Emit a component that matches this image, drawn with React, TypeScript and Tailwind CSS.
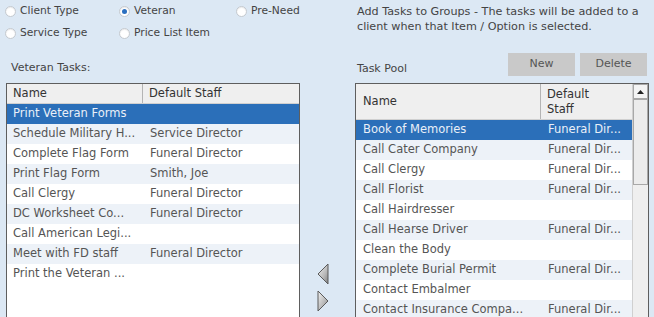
import React from "react";

const font = { fontFamily: '"DejaVu Sans", Verdana, sans-serif' };

const veteranTasks = [
    { name: "Print Veteran Forms", staff: "" },
    { name: "Schedule Military H...", staff: "Service Director" },
    { name: "Complete Flag Form", staff: "Funeral Director" },
    { name: "Print Flag Form", staff: "Smith, Joe" },
    { name: "Call Clergy", staff: "Funeral Director" },
    { name: "DC Worksheet Co...", staff: "Funeral Director" },
    { name: "Call American Legi...", staff: "" },
    { name: "Meet with FD staff", staff: "Funeral Director" },
    { name: "Print the Veteran ...", staff: "" },
];

const taskPool = [
    { name: "Book of Memories", staff: "Funeral Dir..." },
    { name: "Call Cater Company", staff: "Funeral Dir..." },
    { name: "Call Clergy", staff: "Funeral Dir..." },
    { name: "Call Florist", staff: "Funeral Dir..." },
    { name: "Call Hairdresser", staff: "" },
    { name: "Call Hearse Driver", staff: "Funeral Dir..." },
    { name: "Clean the Body", staff: "" },
    { name: "Complete Burial Permit", staff: "Funeral Dir..." },
    { name: "Contact Embalmer", staff: "" },
    { name: "Contact Insurance Compa...", staff: "Funeral Dir..." },
];

function Radio({ label, checked }: { label: string; checked?: boolean }) {
    return (
        <div className="flex items-center gap-[4px] h-[20px]">
            <span className="w-[11px] h-[11px] rounded-full bg-white border border-[#c4c9cf] flex items-center justify-center shadow-[inset_0_1px_1px_rgba(0,0,0,0.08)]">
                {checked && <span className="w-[5px] h-[5px] rounded-full bg-[#2a6fc0]" />}
            </span>
            <span className="text-[10.7px] text-[#444]">{label}</span>
        </div>
    );
}

function Arrow({ dir }: { dir: "left" | "right" }) {
    const pts = dir === "left" ? "12,1 12,21 2,11" : "2,1 2,21 12,11";
    const id = `g-${dir}`;
    return (
        <svg width="14" height="23" viewBox="0 0 14 23">
            <defs>
                <linearGradient id={id} x1="0" y1="0" x2="1" y2="1">
                    <stop offset="0" stopColor="#f2f2f2" />
                    <stop offset="0.6" stopColor="#b8b8b8" />
                    <stop offset="1" stopColor="#7d7d7d" />
                </linearGradient>
            </defs>
            <polygon points={pts} fill={`url(#${id})`} stroke="#5a5a5a" strokeWidth="1" strokeLinejoin="round" />
        </svg>
    );
}

export default function App() {
    return (
        <div className="w-[654px] h-[317px] overflow-hidden bg-[#dce8f4] text-[#444]" style={font}>
            {/* top: radios + description */}
            <div className="flex h-[46px]">
                <div className="w-[350px] pl-[5px] pt-[1px] grid grid-cols-[114px_117px_100px]">
                    <Radio label="Client Type" />
                    <Radio label="Veteran" checked />
                    <Radio label="Pre-Need" />
                    <Radio label="Service Type" />
                    <Radio label="Price List Item" />
                </div>
                <p className="pl-[7px] pt-[4px] text-[11.2px] leading-[15px] text-[#444]">
                    Add Tasks to Groups - The tasks will be added to a<br />
                    client when that Item / Option is selected.
                </p>
            </div>

            {/* labels + buttons */}
            <div className="flex h-[37px]">
                <div className="w-[350px] pl-[11px] pt-[14px] text-[11px]">Veteran Tasks:</div>
                <div className="flex-1 flex items-start pl-[7px] pr-[7px]">
                    <span className="pt-[15px] text-[11px]">Task Pool</span>
                    <div className="ml-auto mt-[7px] flex gap-[5px]">
                        <button className="w-[67px] h-[23px] bg-[#c9c9c9] text-[11px] text-[#555]">New</button>
                        <button className="w-[67px] h-[23px] bg-[#c9c9c9] text-[11px] text-[#555]">Delete</button>
                    </div>
                </div>
            </div>

            {/* tables */}
            <div className="flex">
                <div className="ml-[6px] w-[294px] h-[240px] border border-[#5e5e5e] bg-white">
                    <div className="flex h-[20px] bg-[#efefef] border-b border-[#d0d0d0] text-[11.5px] text-[#333]">
                        <div className="w-[136px] border-r border-[#b4b4b4] pl-[6px] flex items-center">Name</div>
                        <div className="pl-[6px] flex items-center">Default Staff</div>
                    </div>
                    {veteranTasks.map((t, i) => (
                        <div
                            key={t.name}
                            className={`flex h-[20px] items-center text-[11.5px] ${i === 0 ? "bg-[#2b6fb9] text-[#eaf0f8]" : i % 2 === 1 ? "bg-[#edf2f8] text-[#555]" : "bg-white text-[#555]"}`}
                        >
                            <div className="w-[137px] pl-[6px] whitespace-nowrap overflow-hidden">{t.name}</div>
                            <div className="pl-[6px] whitespace-nowrap">{t.staff}</div>
                        </div>
                    ))}
                </div>

                <div className="w-[55px] flex flex-col items-center pt-[180px] pr-[10px]">
                    <Arrow dir="left" />
                    <div className="h-[4px]" />
                    <Arrow dir="right" />
                </div>

                <div className="w-[294px] h-[240px] border border-[#5e5e5e] bg-white flex">
                    <div className="w-[276px]">
                        <div className="flex h-[36px] bg-[#efefef] border-b border-[#d0d0d0] text-[11.5px] text-[#333]">
                            <div className="w-[185px] border-r border-[#b4b4b4] pl-[7px] flex items-center">Name</div>
                            <div className="pl-[6px] flex flex-col justify-center leading-[15px]">
                                <span>Default</span>
                                <span>Staff</span>
                            </div>
                        </div>
                        {taskPool.map((t, i) => (
                            <div
                                key={t.name}
                                className={`flex h-[20px] items-center text-[11.5px] ${i === 0 ? "bg-[#2b6fb9] text-[#eaf0f8]" : i % 2 === 1 ? "bg-[#edf2f8] text-[#555]" : "bg-white text-[#555]"}`}
                            >
                                <div className="w-[186px] pl-[7px] whitespace-nowrap overflow-hidden">{t.name}</div>
                                <div className="pl-[6px] whitespace-nowrap">{t.staff}</div>
                            </div>
                        ))}
                    </div>
                    <div className="w-[16px] bg-[#efefef] border-l border-[#d0d0d0] flex flex-col">
                        <div className="h-[15px] border border-[#a8a8a8] bg-[#f4f4f4] flex items-center justify-center">
                            <svg width="7" height="4" viewBox="0 0 7 4"><polygon points="0,4 7,4 3.5,0" fill="#222" /></svg>
                        </div>
                        <div className="h-[86px] border border-[#a8a8a8] bg-[#ececec]" />
                    </div>
                </div>
            </div>
        </div>
    );
}
